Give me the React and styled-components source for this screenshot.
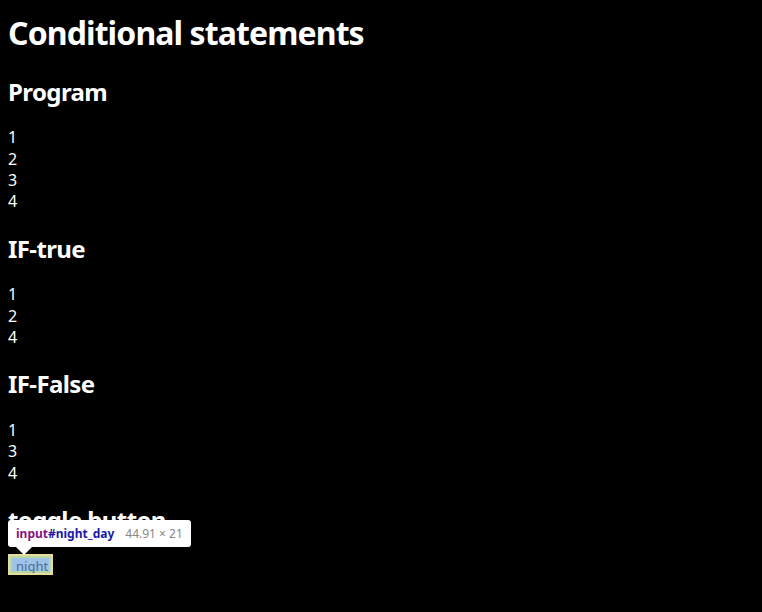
import React from 'react';
import styled, { createGlobalStyle } from 'styled-components';

const GlobalStyle = createGlobalStyle`
  body {
    margin: 8px;
    background: #000;
    color: #fff;
    font-family: "Noto Sans", "Noto Sans CJK KR", sans-serif;
    font-size: 16px;
    line-height: 1.33;
  }
`;

const Title = styled.h1`
  font-size: 32px;
  font-weight: 700;
  margin: 4px 0 21px;
  line-height: 1.33;
  letter-spacing: -0.9px;
`;

const Heading = styled.h2`
  font-size: 24px;
  font-weight: 700;
  margin: 20px 0;
  line-height: 1.33;
  letter-spacing: -0.6px;
`;

const Line = styled.div`
  font-size: 16px;
`;

const Block = styled.div`
  margin-bottom: 20px;
`;

const ToggleArea = styled.div`
  position: relative;
  margin-top: -2px;
`;

const NightInput = styled.input`
  box-sizing: border-box;
  width: 44.91px;
  height: 21px;
  padding: 1px 6px;
  border: 2px solid #e6dc9c;
  background: #b9d7a6;
  font-family: "Noto Sans", sans-serif;
  font-size: 13px;
  color: #4c6d99;
  outline: none;
  box-shadow: inset 0 0 0 2px #b9d7a6, inset 0 0 0 20px #9fc3e6;
  text-align: left;
`;

const Tip = styled.div`
  position: absolute;
  left: 0;
  bottom: 29px;
  display: flex;
  gap: 11px;
  align-items: center;
  background: #fff;
  border-radius: 3px;
  padding: 4px 8px;
  height: 19px;
  font-family: "Noto Sans", sans-serif;
  font-size: 12px;
  white-space: nowrap;
  box-shadow: 0 1px 3px rgba(0, 0, 0, 0.3);
  &::after {
    content: '';
    position: absolute;
    left: 8px;
    bottom: -8px;
    border: 8px solid transparent;
    border-bottom: 0;
    border-top-color: #fff;
  }
`;

const TagName = styled.span`
  font-weight: 700;
  color: #881280;
`;

const TagId = styled.span`
  font-weight: 700;
  color: #1a1aa6;
`;

const Size = styled.span`
  color: #888;
`;

const sections = [
  { title: 'Program', lines: ['1', '2', '3', '4'] },
  { title: 'IF-true', lines: ['1', '2', '4'] },
  { title: 'IF-False', lines: ['1', '3', '4'] },
];

export default function App() {
  return (
    <>
      <GlobalStyle />
      <Title>Conditional statements</Title>
      {sections.map((s) => (
        <div key={s.title}>
          <Heading>{s.title}</Heading>
          <Block>
            {s.lines.map((l, i) => (
              <Line key={i}>{l}</Line>
            ))}
          </Block>
        </div>
      ))}
      <Heading>toggle button</Heading>
      <ToggleArea>
        <Tip>
          <span>
            <TagName>input</TagName>
            <TagId>#night_day</TagId>
          </span>
          <Size>44.91 × 21</Size>
        </Tip>
        <NightInput type="button" value="night" readOnly />
      </ToggleArea>
    </>
  );
}
